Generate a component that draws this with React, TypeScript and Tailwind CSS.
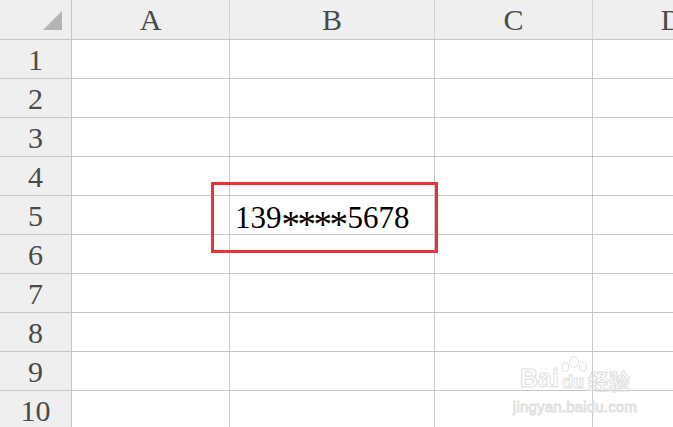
import React from 'react'

const cols = ['A', 'B', 'C', 'D']
const widths = ['w-[158px]', 'w-[205px]', 'w-[158px]', 'w-[158px]']
const rows = [1, 2, 3, 4, 5, 6, 7, 8, 9, 10]

function Masked() {
  return (
    <span className="flex items-baseline">
      139
      <span className="relative top-[9px] text-[37px] tracking-[-2.5px]">****</span>
      <span className="ml-[2px]">5678</span>
    </span>
  )
}

export default function App() {
  return (
    <div className="relative w-[673px] h-[427px] overflow-hidden bg-white font-['Liberation_Serif',serif]">
      {/* header row */}
      <div className="flex h-[40px] bg-[#efefef] border-b border-[#c6c6c6]">
        <div className="w-[72px] shrink-0 border-r border-[#c6c6c6] relative">
          <svg className="absolute left-[43px] top-[11px]" width="20" height="20" viewBox="0 0 20 20">
            <polygon points="19,0 19,19 0,19" fill="#b4b4b4" />
          </svg>
        </div>
        {cols.map((c, i) => (
          <div
            key={c}
            className={`${widths[i]} shrink-0 border-r border-[#d4d4d4] flex items-center justify-center text-[30px] text-[#4a4a4a] leading-none pt-[1px]`}
          >
            {c}
          </div>
        ))}
      </div>

      {rows.map(r => (
        <div key={r} className="flex h-[39px]">
          <div className="w-[72px] shrink-0 bg-[#efefef] border-r border-b border-[#c6c6c6] flex items-center justify-center text-[30px] text-[#4a4a4a] leading-none pt-[2px]">
            {r}
          </div>
          {cols.map((c, i) => (
            <div
              key={c}
              className={`${widths[i]} shrink-0 border-r border-b border-[#c6c6c6] flex items-center text-[31px] text-black leading-none pl-[5px] pt-[1px] whitespace-nowrap`}
            >
              {r === 5 && c === 'B' ? <Masked /> : null}
            </div>
          ))}
        </div>
      ))}

      {/* red highlight box */}
      <div className="absolute left-[211px] top-[182px] w-[227px] h-[71px] border-[3px] border-[#ec3237]" />

      {/* watermark */}
      <div className="absolute left-[514px] top-[352px] w-[122px] flex flex-col items-center text-transparent [-webkit-text-stroke:1px_#e0e0e0] font-['Liberation_Sans',sans-serif]">
        <div className="flex items-end mt-[14px]">
          <span className="text-[25px] font-bold leading-none">Bai</span>
          <span className="relative text-[18px] font-bold leading-none ml-[3px]">
            <svg className="absolute -top-[17px] left-[-3px]" width="30" height="20" viewBox="0 0 30 20" fill="none" stroke="#e0e0e0">
              <ellipse cx="15" cy="6" rx="4.5" ry="5.5" />
              <ellipse cx="6" cy="11" rx="3.5" ry="4.5" />
              <ellipse cx="24" cy="11" rx="3.5" ry="4.5" />
            </svg>
            du
          </span>
          <span className="text-[21px] font-bold leading-none ml-[4px] font-['Noto_Sans_CJK_SC',sans-serif]">经验</span>
        </div>
        <div className="text-[15px] leading-none mt-[8px] tracking-[0.2px]">jingyan.baidu.com</div>
      </div>
    </div>
  )
}
